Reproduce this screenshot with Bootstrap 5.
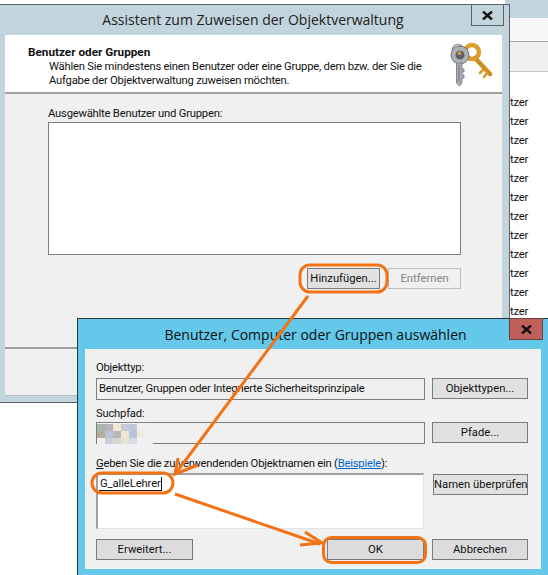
<!DOCTYPE html>
<html lang="de">
<head>
  <meta charset="UTF-8">
  <meta name="viewport" content="width=device-width, initial-scale=1">
  <title>Objektverwaltung</title>
  <link href="https://cdn.jsdelivr.net/npm/bootstrap@5.3.0/dist/css/bootstrap.min.css" rel="stylesheet">
  <style>
    html, body { margin: 0; height: 575px; overflow: hidden; }
    body {
      position: relative; width: 548px; background: #fff; color: #111;
      font-family: Roboto, "Liberation Sans", sans-serif; font-size: 11.25px; line-height: 15px; letter-spacing: -.22px;
    }
    /* fenster hinten */
    .back-win { position: absolute; left: 505px; top: 0; width: 43px; height: 404px; }
    .back-title { height: 18px; background: #c3d5dc; }
    .back-strip { height: 24px; background: #f7f7f7; border-bottom: 1px solid #a9a9a9; }
    .back-tool { height: 30px; background: #f0f0f0; border-bottom: 1px solid #c4c4c4; }
    .back-list { padding: 21px 0 0 5px; line-height: 19px; }
    /* assistent */
    .wiz-win {
      position: absolute; left: -3px; top: 4px; width: 513px; height: 399px;
      background: #c3d5dc; border: 1px solid #5c6266; display: flex; flex-direction: column;
    }
    .wiz-title { height: 30px; font-family: "Open Sans", sans-serif; font-size: 14px; letter-spacing: 0; line-height: 30px; text-align: center; color: #222; flex-shrink: 0; padding-right: 1px; }
    .wiz-close {
      position: absolute; right: 5px; top: 0; width: 33px; height: 21px; border: 1px solid #5c6266; border-top: 0;
      display: flex; align-items: center; justify-content: center;
    }
    .wiz-body { margin-left: 7px; margin-right: 7px; height: 361px; background: #f0f0f0; display: flex; flex-direction: column; border-bottom: 1px solid #b4c0c6; }
    .wiz-head { height: 59px; background: #fff; border-bottom: 2px solid #a0a0a0; padding: 10px 0 0 23px; position: relative; flex-shrink: 0; }
    .wiz-head h6 { font-size: 11.75px; line-height: 15px; font-weight: 700; margin: 0; font-family: inherit; letter-spacing: 0; }
    .wiz-head p { margin: 0 0 0 21px; line-height: 14px; }
    .key-icon { position: absolute; right: 9px; top: 4px; }
    .wiz-main { height: 255px; padding: 12px 41px 0 43px; border-bottom: 2px solid #a0a0a0; flex-shrink: 0; }
    .list-box { height: 133px; background: #fff; border: 1px solid #7f7f7f; margin: 1px 0 13px; }
    .win-btn {
      --bs-btn-padding-x: 0; --bs-btn-padding-y: 0; --bs-btn-font-size: 11.25px; --bs-btn-line-height: 19px;
      --bs-btn-border-radius: 0; --bs-btn-color: #111; --bs-btn-bg: #e1e1e1; --bs-btn-border-color: #7a7a7a;
      font-family: inherit; height: 21px; width: 73px; flex-shrink: 0; white-space: nowrap;
    }
    .win-btn:disabled { --bs-btn-disabled-color: #838383; --bs-btn-disabled-bg: #f0f0f0; --bs-btn-disabled-border-color: #bdbdbd; --bs-btn-disabled-opacity: 1; }
    /* auswahl-dialog */
    .pick-win {
      position: absolute; left: 77px; top: 318px; width: 471px; height: 257px;
      background: #63c8ea; border-left: 1px solid #333; border-top: 1px solid #333;
    }
    .pick-title { height: 30px; font-family: "Open Sans", sans-serif; font-size: 14px; letter-spacing: 0; line-height: 31px; text-align: center; color: #111; padding-left: 5px; }
    .pick-close {
      position: absolute; right: 5px; top: -1px; width: 34px; height: 22px; background: #c0605a; border: 1px solid #6e4240;
      display: flex; align-items: center; justify-content: center;
    }
    .pick-body { margin-left: 7px; width: 456px; height: 220px; background: #f0f0f0; padding: 11px 13px 0 11px; }
    .label-type { margin-bottom: 3px; }
    .label-path { margin-bottom: 1px; }
    .label-names { margin: 12px 0 2px; }
    .pick-row { margin-bottom: 6px; gap: 7px; }
    .pick-field { height: 22px; background: #f0f0f0; border: 1px solid #7f7f7f; padding: 2px 2px; flex: 1; line-height: 16px; position: relative; }
    .pick-row .win-btn { width: 96px; height: 21px; }
    .pick-names { gap: 9px; }
    .pick-names .win-btn { width: 95px; height: 21px; margin-top: 1px; }
    .name-box { flex: 1; height: 56px; background: #fff; border: 1px solid #a0a0a0; border-right-color: #e3e3e3; border-bottom-color: #e3e3e3; border-top-width: 2px; border-left-width: 2px; padding: 1px 0 0 1px; line-height: 15px; }
    .name-box span { border-bottom: 1px solid #111; border-right: 1px solid #111; padding: 0 0 0 1px; display: inline-block; line-height: 13px; letter-spacing: -.1px; }
    .pick-link { color: #0066cc; text-decoration: underline; }
    .pick-foot { margin-top: 10px; }
    .pick-foot .win-btn { width: 97px; height: 21px; background: #dcdcdc; }
    .pick-foot .win-wide { width: 96px; }
    .blur-img { position: absolute; left: 0; top: 1px; }
    .draw-layer { position: absolute; left: 0; top: 0; pointer-events: none; }
  </style>
</head>
<body>
  <!-- fenster im hintergrund -->
  <div class="back-win">
    <div class="back-title"></div>
    <div class="back-strip"></div>
    <div class="back-tool"></div>
    <div class="back-list" id="backList"></div>
  </div>

  <!-- assistent -->
  <div class="wiz-win">
    <div class="wiz-title">Assistent zum Zuweisen der Objektverwaltung</div>
    <div class="wiz-close">
      <svg width="11" height="9" viewBox="0 0 11 9"><path d="M1 0.5 L10 8.5 M10 0.5 L1 8.5" stroke="#111" stroke-width="2.4"/></svg>
    </div>
    <div class="wiz-body">
      <div class="wiz-head">
        <h6>Benutzer oder Gruppen</h6>
        <p>Wählen Sie mindestens einen Benutzer oder eine Gruppe, dem bzw. der Sie die<br>Aufgabe der Objektverwaltung zuweisen möchten.</p>
        <svg class="key-icon" width="44" height="48" viewBox="0 0 44 48">
          <g fill="none" stroke-linecap="round">
            <path d="M26 19 L41 35" stroke="#d08e1e" stroke-width="4.500"/>
            <path d="M34 31 L31 34 M38 34 L35 38" stroke="#d99a2a" stroke-width="2.500"/>
            <circle cx="23" cy="13" r="7" stroke="#dc9c2e" stroke-width="4.500"/>
            <circle cx="9" cy="11" r="5.500" stroke="#8f959b" stroke-width="1.500"/>
          </g>
          <circle cx="11" cy="16" r="9" fill="#aeb2b7" stroke="#6f747a"/>
          <circle cx="11" cy="16" r="4.500" fill="#5d6066"/>
          <path d="M11 11.500 L12.500 16 L8 15 Z" fill="#e0a32c"/>
          <path d="M7.500 24 H13 V30 H15 V33 H13 V36 H15 V39 H13 V44 L10.500 47 L7.500 44 Z" fill="#a9adb2" stroke="#6f747a" stroke-width=".8"/>
          <path d="M10 26 V43" stroke="#73777c" stroke-width="1"/>
        </svg>
      </div>
      <div class="wiz-main">
        <div>Ausgewählte Benutzer und Gruppen:</div>
        <div class="list-box"></div>
        <div class="d-flex justify-content-end gap-2">
          <button type="button" class="btn win-btn">Hinzufügen...</button>
          <button type="button" class="btn win-btn" disabled>Entfernen</button>
        </div>
      </div>
    </div>
  </div>

  <!-- benutzer auswaehlen -->
  <div class="pick-win">
    <div class="pick-title">Benutzer, Computer oder Gruppen auswählen</div>
    <div class="pick-close">
      <svg width="11" height="9" viewBox="0 0 11 9"><path d="M1 0.5 L10 8.5 M10 0.5 L1 8.5" stroke="#111" stroke-width="2.4"/></svg>
    </div>
    <div class="pick-body">
      <div class="label-type">Objekttyp:</div>
      <div class="d-flex pick-row">
        <div class="pick-field">Benutzer, Gruppen oder Integrierte Sicherheitsprinzipale</div>
        <button type="button" class="btn win-btn">Objekttypen...</button>
      </div>
      <div class="label-path">Suchpfad:</div>
      <div class="d-flex pick-row">
        <div class="pick-field">
          <svg class="blur-img" width="56" height="20" viewBox="0 0 56 20" id="blurImg"></svg>
        </div>
        <button type="button" class="btn win-btn">Pfade...</button>
      </div>
      <div class="label-names"><u>G</u>eben Sie die zu verwendenden Objektnamen ein (<span class="pick-link">Beispiele</span>):</div>
      <div class="d-flex pick-names">
        <div class="name-box"><span>G_alleLehrer</span></div>
        <button type="button" class="btn win-btn">Namen überprüfen</button>
      </div>
      <div class="d-flex justify-content-between pick-foot">
        <button type="button" class="btn win-btn">Erweitert...</button>
        <div class="d-flex gap-2">
          <button type="button" class="btn win-btn">OK</button>
          <button type="button" class="btn win-btn win-wide">Abbrechen</button>
        </div>
      </div>
    </div>
  </div>

  <!-- markierungen -->
  <svg class="draw-layer" width="548" height="575" viewBox="0 0 548 575" fill="none" stroke="#f47216" stroke-width="3">
    <rect x="300" y="265" width="87" height="27" rx="10"/>
    <path d="M308 296 L176 473"/>
    <path d="M178 458 L175 474 L198 465"/>
    <rect x="92" y="473" width="81" height="20" rx="10"/>
    <path d="M175 494 L320 544"/>
    <path d="M305 532 L322 543 L300 545"/>
    <rect x="323.500" y="537.500" width="102" height="25" rx="8"/>
  </svg>

  <script>
    // "Benutzer"-Zeilen der Liste im Hintergrund
    document.getElementById("backList").innerHTML = Array(12).fill("tzer").join("<br>");

    // verpixelter Suchpfad
    const blurColors = [
      ["#a9b8ae", "#b6b6b6", "#f0e8d6", "#c9c9dc", "#c4c6dc", "#f0f0f0", "#f0f0f0"],
      ["#b5ae9c", "#b8c2d8", "#b8b8b8", "#f0e8d6", "#b8c4da", "#f0ead8", "#f0f0f0"],
      ["#f0f0f0", "#c9cfd8", "#d8d8d0", "#e8e4d6", "#d8dce8", "#f0f0f0", "#f0f0f0"]
    ];
    let rects = "";
    blurColors.forEach((row, y) => row.forEach((c, x) => {
      rects += `<rect x="${x * 8}" y="${y * 7}" width="8" height="7" fill="${c}"/>`;
    }));
    document.getElementById("blurImg").innerHTML = rects;
  </script>
  <script src="https://cdn.jsdelivr.net/npm/bootstrap@5.3.0/dist/js/bootstrap.bundle.min.js"></script>
</body>
</html>
